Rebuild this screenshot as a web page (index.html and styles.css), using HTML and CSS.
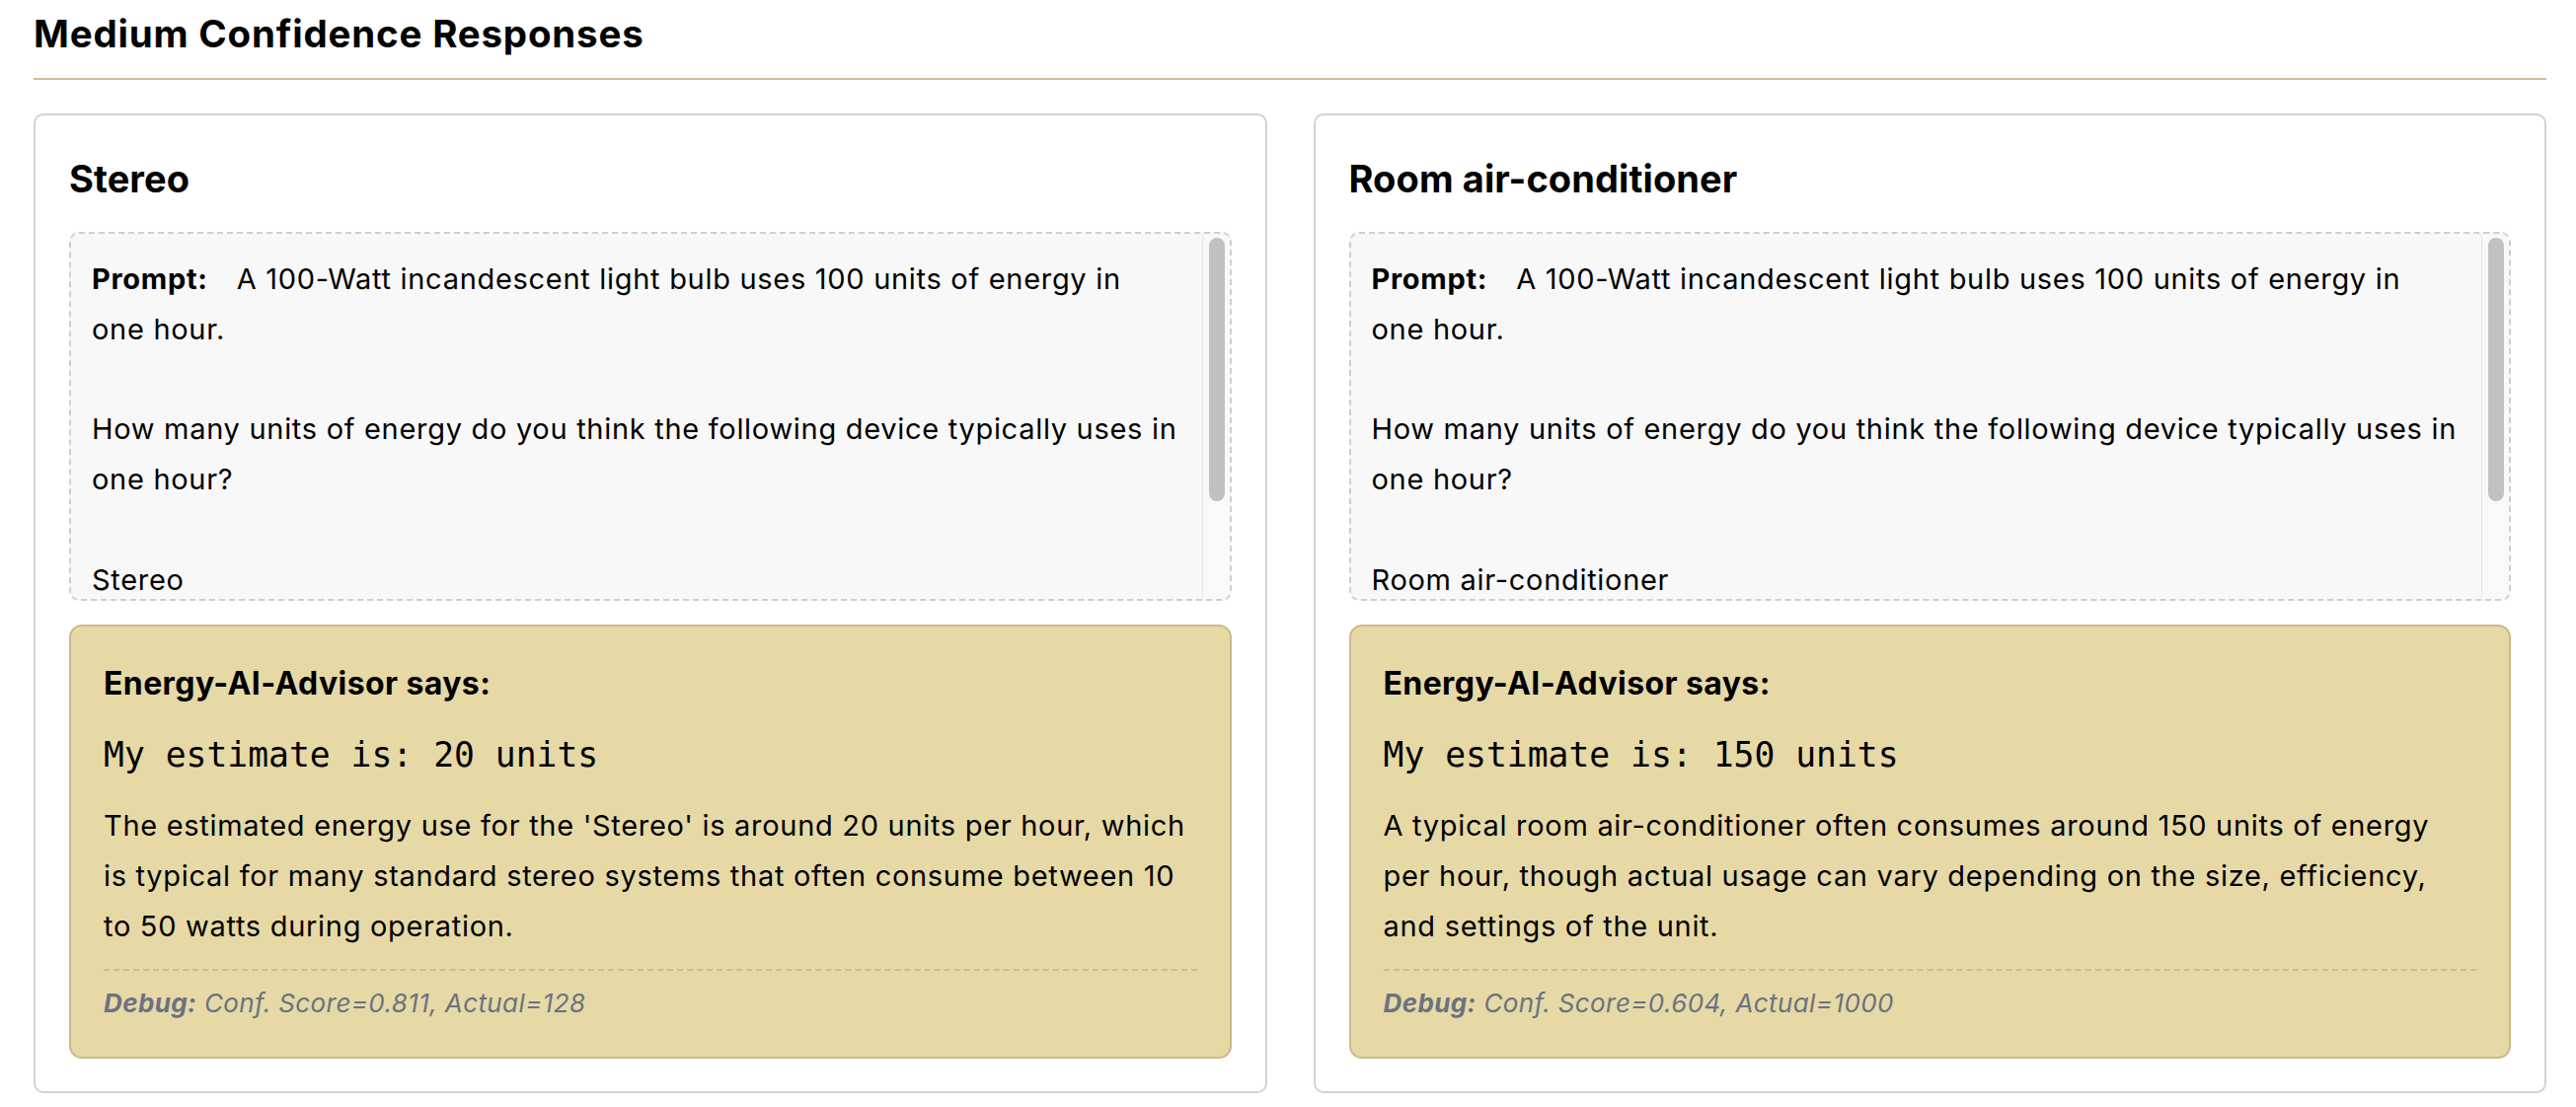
FILE: index.html
```html
<!DOCTYPE html>
<html lang="en">
<head>
<meta charset="utf-8">
<title>Medium Confidence Responses</title>
<link rel="stylesheet" href="styles.css">
</head>
<body>
<section class="section">
  <h2 class="section-title">Medium Confidence Responses</h2>
  <div class="cards">
    <article class="card">
      <h3 class="card-title">Stereo</h3>
      <div class="prompt-box">
        <div class="prompt-text"><strong class="prompt-label">Prompt:</strong>A 100-Watt incandescent light bulb uses 100 units of energy in one hour.

How many units of energy do you think the following device typically uses in one hour?

Stereo</div>
        <div class="scrollbar"><div class="scrollbar-thumb"></div></div>
      </div>
      <div class="answer">
        <div class="answer-who">Energy-AI-Advisor says:</div>
        <div class="answer-estimate">My estimate is: 20 units</div>
        <p class="answer-text">The estimated energy use for the 'Stereo' is around 20 units per hour, which is typical for many standard stereo systems that often consume between 10 to 50 watts during operation.</p>
        <div class="answer-debug"><b>Debug:</b> Conf. Score=0.811, Actual=128</div>
      </div>
    </article>
    <article class="card">
      <h3 class="card-title">Room air-conditioner</h3>
      <div class="prompt-box">
        <div class="prompt-text"><strong class="prompt-label">Prompt:</strong>A 100-Watt incandescent light bulb uses 100 units of energy in one hour.

How many units of energy do you think the following device typically uses in one hour?

Room air-conditioner</div>
        <div class="scrollbar"><div class="scrollbar-thumb"></div></div>
      </div>
      <div class="answer">
        <div class="answer-who">Energy-AI-Advisor says:</div>
        <div class="answer-estimate">My estimate is: 150 units</div>
        <p class="answer-text">A typical room air-conditioner often consumes around 150 units of energy<br>per hour, though actual usage can vary depending on the size, efficiency, and settings of the unit.</p>
        <div class="answer-debug"><b>Debug:</b> Conf. Score=0.604, Actual=1000</div>
      </div>
    </article>
  </div>
</section>
</body>
</html>
```
FILE: styles.css
```css
html, body {
  margin: 0;
  padding: 0;
  background: #ffffff;
}

body {
  font-family: "Inter", "Noto Sans", "Liberation Sans", sans-serif;
  color: #000;
}

.section {
  padding: 14px 30px 0 34px;
}

.section-title {
  margin: 0;
  font-size: 38.5px;
  line-height: 41px;
  font-weight: 700;
  padding-bottom: 24px;
  border-bottom: 2px solid #cdbd92;
  letter-spacing: 0.8px;
}

.cards {
  display: grid;
  grid-template-columns: 1fr 1fr;
  gap: 47px;
  margin-top: 34px;
}

.card {
  border: 2px solid #d2d2d2;
  border-radius: 10px;
  padding: 33px 34px;
  background: #fff;
}

.card-title {
  margin: 11px 0 34px;
  font-size: 38px;
  line-height: 40px;
  font-weight: 700;
  letter-spacing: 0.1px;
}

.prompt-box {
  position: relative;
  height: 370px;
  overflow: hidden;
  border: 2px dashed #cfcfcf;
  border-radius: 10px;
  background: #f8f8f8;
}

.prompt-text {
  white-space: pre-wrap;
  padding: 21px 49px 21px 21px;
  font-size: 29px;
  line-height: 50.8px;
  letter-spacing: 0.7px;
}

.prompt-label {
  font-weight: 700;
  margin-right: 29px;
}

.scrollbar {
  position: absolute;
  top: 0;
  right: 0;
  bottom: 0;
  width: 27px;
  background: #f9f9f9;
  border-left: 1px solid #e6e6e6;
}

.scrollbar-thumb {
  margin: 4px 5px 0 6px;
  height: 267px;
  border-radius: 8px;
  background: #c1c1c1;
}

.answer {
  margin-top: 24px;
  border: 2px solid #ccb98a;
  border-radius: 13px;
  background: #e6d9a6;
  padding: 33px;
}

.answer-who {
  font-size: 32px;
  line-height: 50px;
  font-weight: 700;
  letter-spacing: 0.4px;
}

.answer-estimate {
  margin-top: 16px;
  font-family: "DejaVu Sans Mono", "Liberation Mono", monospace;
  font-size: 34.7px;
  line-height: 62px;
}

.answer-text {
  margin: 16px 0 0;
  font-size: 29px;
  line-height: 50.8px;
  letter-spacing: 0.7px;
}

.answer-debug {
  margin-top: 18px;
  border-top: 2px dashed #c9bd97;
  padding-top: 12px;
  font-size: 26px;
  line-height: 42px;
  font-style: italic;
  letter-spacing: 0.4px;
  color: #6b7280;
}

.answer-debug b {
  font-weight: 700;
}
```
